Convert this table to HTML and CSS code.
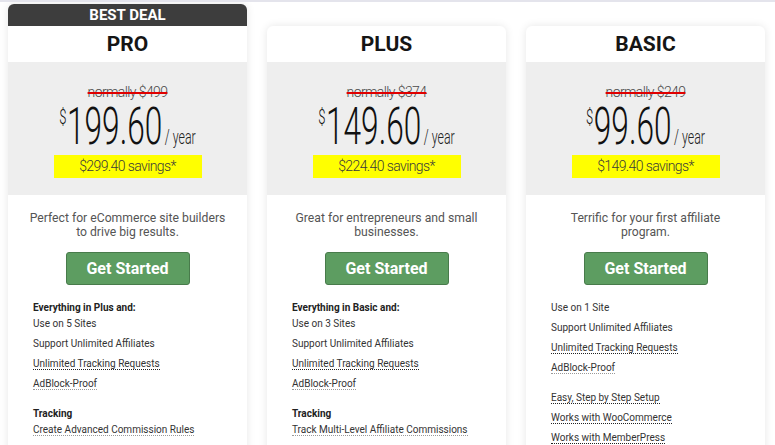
FILE: index.html
```html
<!DOCTYPE html>
<html lang="en">
<head>
<meta charset="utf-8">
<title>Pricing</title>
<link rel="stylesheet" href="styles.css">
</head>
<body>
<main class="plans">
  <section class="card card--featured">
    <div class="badge">BEST DEAL</div>
    <h2 class="title">PRO</h2>
    <div class="pricebox">
      <div class="normally">normally $499</div>
      <div class="price"><span class="cur">$</span><span class="amt">199.60</span><span class="per">/ year</span></div>
      <div class="save">$299.40 savings*</div>
    </div>
    <div class="body">
      <p class="desc">Perfect for eCommerce site builders<br>to drive big results.</p>
      <a class="btn" href="#">Get Started</a>
      <div class="features">
        <div class="group">
          <h4>Everything in Plus and:</h4>
          <div class="item">Use on 5 Sites</div>
          <div class="item">Support Unlimited Affiliates</div>
          <div class="item"><span class="tip">Unlimited Tracking Requests</span></div>
          <div class="item"><span class="tip tip--light">AdBlock-Proof</span></div>
        </div>
        <div class="group">
          <h4>Tracking</h4>
          <div class="item"><span class="tip tip--light">Create Advanced Commission Rules</span></div>
        </div>
      </div>
    </div>
  </section>

  <section class="card">
    <h2 class="title">PLUS</h2>
    <div class="pricebox">
      <div class="normally">normally $374</div>
      <div class="price"><span class="cur">$</span><span class="amt">149.60</span><span class="per">/ year</span></div>
      <div class="save">$224.40 savings*</div>
    </div>
    <div class="body">
      <p class="desc">Great for entrepreneurs and small<br>businesses.</p>
      <a class="btn" href="#">Get Started</a>
      <div class="features">
        <div class="group">
          <h4>Everything in Basic and:</h4>
          <div class="item">Use on 3 Sites</div>
          <div class="item">Support Unlimited Affiliates</div>
          <div class="item"><span class="tip">Unlimited Tracking Requests</span></div>
          <div class="item"><span class="tip tip--light">AdBlock-Proof</span></div>
        </div>
        <div class="group">
          <h4>Tracking</h4>
          <div class="item"><span class="tip tip--light">Track Multi-Level Affiliate Commissions</span></div>
        </div>
      </div>
    </div>
  </section>

  <section class="card">
    <h2 class="title">BASIC</h2>
    <div class="pricebox">
      <div class="normally">normally $249</div>
      <div class="price"><span class="cur">$</span><span class="amt">99.60</span><span class="per">/ year</span></div>
      <div class="save">$149.40 savings*</div>
    </div>
    <div class="body">
      <p class="desc">Terrific for your first affiliate<br>program.</p>
      <a class="btn" href="#">Get Started</a>
      <div class="features">
        <div class="group">
          <div class="item">Use on 1 Site</div>
          <div class="item">Support Unlimited Affiliates</div>
          <div class="item"><span class="tip">Unlimited Tracking Requests</span></div>
          <div class="item"><span class="tip tip--light">AdBlock-Proof</span></div>
        </div>
        <div class="group">
          <div class="item"><span class="tip">Easy, Step by Step Setup</span></div>
          <div class="item"><span class="tip">Works with WooCommerce</span></div>
          <div class="item"><span class="tip">Works with MemberPress</span></div>
        </div>
      </div>
    </div>
  </section>
</main>
</body>
</html>
```

FILE: styles.css
```css
* { box-sizing: border-box; }
html, body { margin: 0; padding: 0; }
body {
  background: #ffffff;
  font-family: Roboto, "Liberation Sans", Arial, sans-serif;
  border-top: 2px solid #e4e4ec;
  overflow: hidden;
  height: 445px;
}
.plans {
  display: flex;
  align-items: flex-start;
  gap: 20px;
  padding: 2px 10px 0 8px;
}
.card {
  flex: none;
  width: 239px;
  background: #fff;
  border-radius: 6px 6px 0 0;
  box-shadow: 0 0 9px rgba(0, 0, 0, 0.10);
  margin-top: 22px;
  overflow: hidden;
  min-height: 500px;
}
.card--featured { margin-top: 0; }
.badge {
  height: 22px;
  line-height: 22px;
  background: #3d3d3d;
  color: #fff;
  font-weight: 700;
  font-size: 15px;
  text-align: center;
}
.title {
  margin: 0;
  height: 36px;
  line-height: 36px;
  font-size: 21px;
  font-weight: 700;
  color: #151515;
  text-align: center;
}
.pricebox {
  background: #eeeeee;
  padding: 22px 0 17px;
  text-align: center;
}
.normally {
  font-size: 14px;
  line-height: 16px;
  font-weight: 300;
  letter-spacing: -0.6px;
  color: #4a4a4a;
  text-decoration: line-through;
  text-decoration-color: #e00000;
  text-decoration-thickness: 1.5px;
}
.price {
  display: flex;
  justify-content: center;
  align-items: baseline;
  margin-top: 2px;
  transform: scaleX(0.62);
  font-weight: 300;
  color: #111;
}
.cur {
  align-self: flex-start;
  font-size: 21px;
  line-height: 1;
  margin-top: 5px;
  margin-right: 1px;
}
.amt {
  font-size: 51px;
  line-height: 50px;
}
.per {
  font-size: 20px;
  line-height: 1;
  margin-left: 4px;
  color: #222;
}
.save {
  width: 148px;
  height: 23px;
  margin: 3px auto 0;
  line-height: 23px;
  background: #ffff00;
  font-size: 14px;
  font-weight: 300;
  letter-spacing: -0.6px;
  color: #3a3a3a;
}
.body {
  padding: 16px 25px 0;
}
.desc {
  margin: 0 -10px;
  font-size: 12.2px;
  line-height: 14px;
  font-weight: 400;
  color: #555;
  text-align: center;
}
.btn {
  display: block;
  width: 124px;
  height: 33px;
  margin: 13px auto 0;
  background: #5d9d61;
  border: 1px solid #487b4b;
  border-radius: 3px;
  color: #fff;
  font-size: 16px;
  font-weight: 700;
  line-height: 31px;
  text-align: center;
  text-decoration: none;
}
.features {
  margin-top: 13px;
  font-size: 10px;
  color: #333;
}
.group + .group { margin-top: 10px; }
.group h4 {
  margin: 0 0 -4px;
  font-size: 10px;
  line-height: 20px;
  font-weight: 700;
  color: #222;
}
.item { line-height: 20px; }
.tip { border-bottom: 1px dotted #222; }
.tip--light { border-bottom-color: #999; }
```
